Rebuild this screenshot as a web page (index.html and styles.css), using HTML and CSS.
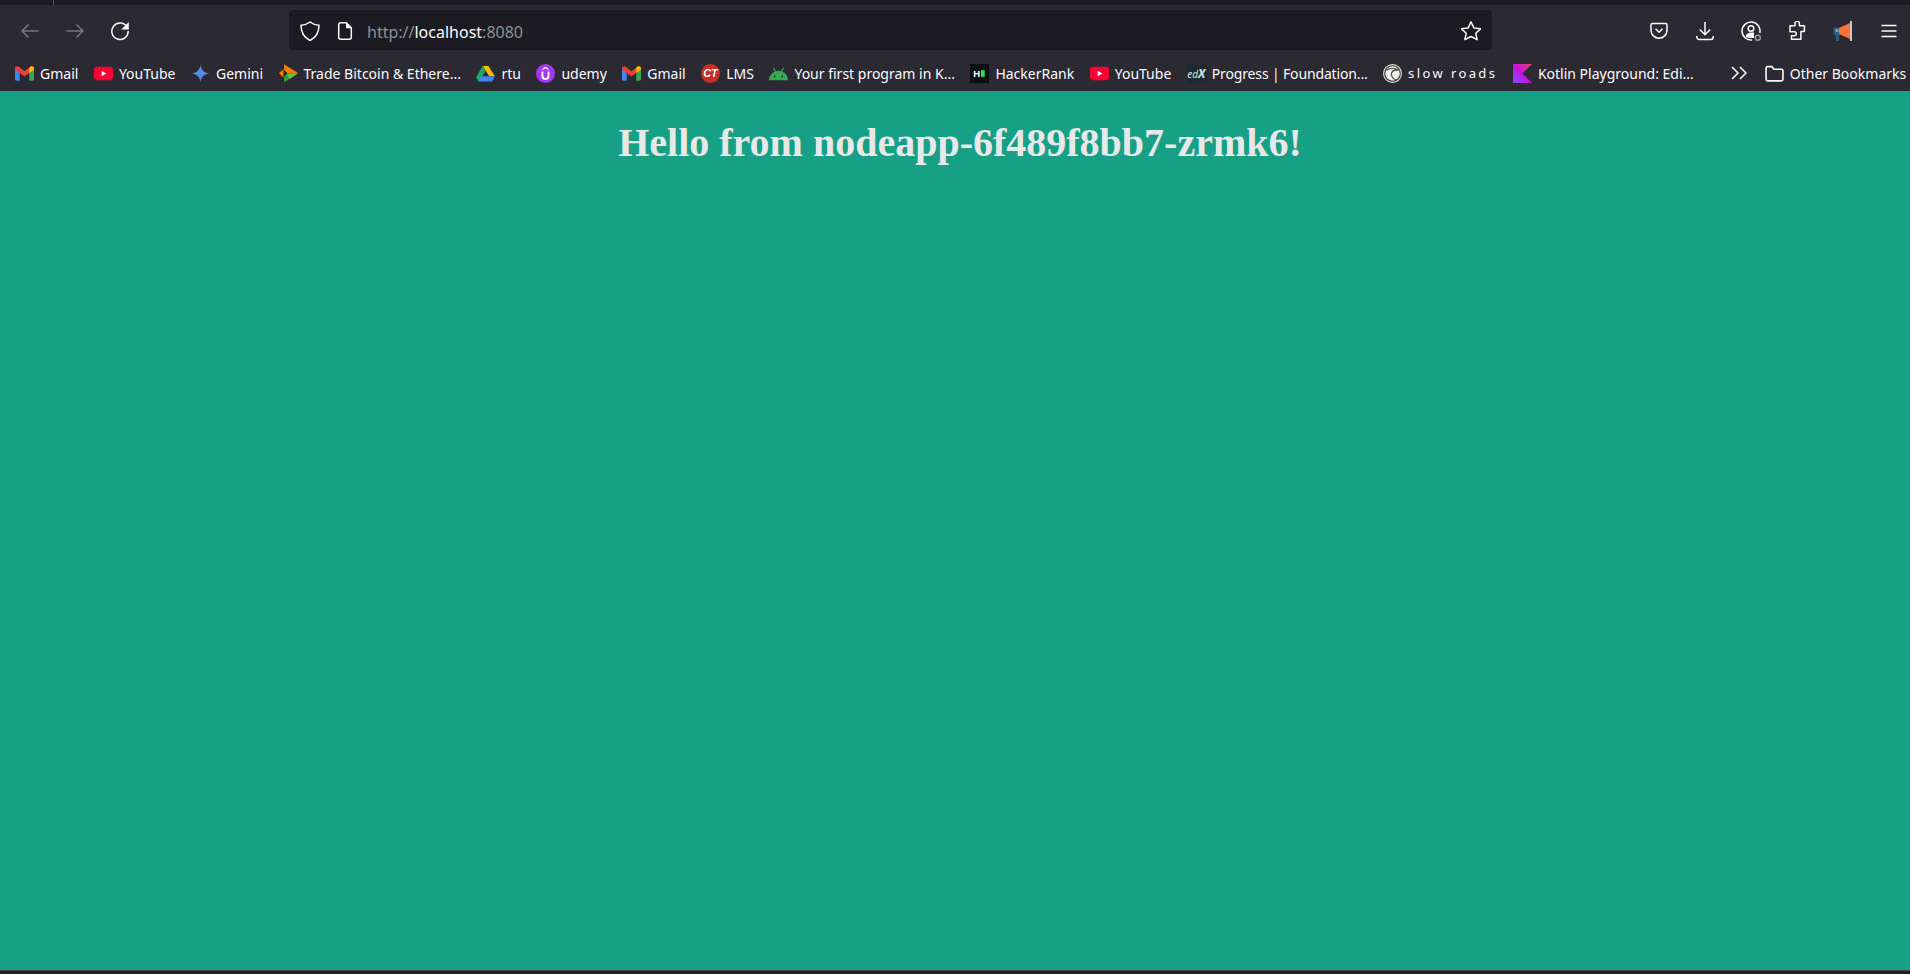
FILE: index.html
```html
<!DOCTYPE html>
<html lang="en">
<head>
  <meta charset="UTF-8" />
  <title>Hello from nodeapp</title>
  <link rel="stylesheet" href="styles.css">
</head>
<body>
  <div class="tabstrip"><span class="tab-edge"></span></div>

  <div class="toolbar">
    <div class="nav">
      <svg class="ico dim" viewBox="0 0 20 20"><path d="M18.500 10H2M8.500 3.500 2 10l6.500 6.500"/></svg>
      <svg class="ico dim" viewBox="0 0 20 20"><path d="M1.500 10H18M11.500 3.500 18 10l-6.500 6.500"/></svg>
      <svg class="ico" viewBox="0 0 20 20"><path d="M17 6A8.200 8.200 0 1 0 18.200 10"/><path class="fill" d="M18.800 1v7.500h-7.500z"/></svg>
    </div>
    <div class="urlbar">
      <svg class="ico" viewBox="0 0 20 20"><path d="M10 1c2.500 2 5.500 3 9 3.200 0 6.800-2 11.800-9 15.300-7-3.500-9-8.500-9-15.300C4.500 4 7.500 3 10 1z"/></svg>
      <svg class="ico page" viewBox="0 0 20 20"><path d="M5.500 1.800h5.800l5 5v9.400a2 2 0 0 1-2 2H5.700a2 2 0 0 1-2-2V3.800a2 2 0 0 1 1.800-2z"/><path class="fill" d="M11 1.800l5.300 5.400H11z"/></svg>
      <span class="url">http://<b>localhost</b>:8080</span>
      <svg class="ico star" viewBox="0 0 20 20"><path d="M10 .9l3 6.200 6.600.7-4.800 4.500 1.300 6.400-6.100-3.200-6.100 3.200 1.300-6.400L.4 7.800 7 7.100z"/></svg>
    </div>
    <div class="tools">
      <svg class="ico" viewBox="0 0 20 20"><path d="M3.500 2.500h13a1.500 1.500 0 0 1 1.500 1.500v5.200a8 8 0 0 1-16 0V4a1.500 1.500 0 0 1 1.500-1.500z"/><path d="M6.500 7.800 10 11.300l3.500-3.500"/></svg>
      <svg class="ico" viewBox="0 0 20 20"><path d="M10 1v12.500M4.800 8.500l5.200 5.200 5.200-5.200M1.800 15v1a2.500 2.500 0 0 0 2.500 2.500h11.400a2.500 2.500 0 0 0 2.500-2.500v-1"/></svg>
      <svg class="ico" viewBox="0 0 20 20"><path d="M18.800 12A9 9 0 1 0 11 19"/><circle cx="10" cy="7.500" r="2.800"/><path class="fill" d="M4.500 15.500c1-3 3.200-4 5.500-4h3v5.500h-4.500c-1.500-.2-3-.6-4-1.500z"/><circle class="badge" cx="16.800" cy="16.800" r="2.500"/></svg>
      <svg class="ico" viewBox="0 0 20 20"><path d="M8 2.500a2.200 2.200 0 0 1 4.400 0v2.300h5v5.800h-3.500v7.700H4.500v-3.600h2.800a2 2 0 0 0 0-4H3V4.800h5z"/></svg>
      <svg class="ico" viewBox="0 0 20 20"><path class="mega-blue" d="M.5 6.500h7v7L6 14.500V20H3v-5.500l-2.500-1z"/><path class="mega-grey" d="M2.500 8h3v3h-3z"/><path class="mega-orange" d="M6 7l11-5v16L6 13z"/><path class="mega-line" d="M18 0v20"/></svg>
      <svg class="ico" viewBox="0 0 20 20"><path d="M2.500 4.500h15M2.500 10h15M2.500 15.500h15"/></svg>
    </div>
  </div>

  <div class="bookmarks">
    <a class="bm">
      <svg class="fav" viewBox="0 0 20 16"><path fill="#4285f4" d="M0 3v11a1.500 1.500 0 0 0 1.500 1.500H5V7z"/><path fill="#34a853" d="M20 3v11a1.500 1.500 0 0 1-1.500 1.500H15V7z"/><path fill="#ea4335" d="M0 2.500C0 .6 2.200-.4 3.600.7L10 5.500 16.400.7C17.800-.4 20 .6 20 2.500V4l-5 3.500-5 3.700-5-3.700-5-3.500z"/><path fill="#fbbc04" d="M15 2.500 16.400.7C17.800-.4 20 .6 20 2.500V4l-5 3.500z"/></svg>
      <span>Gmail</span>
    </a>
    <a class="bm">
      <svg class="fav" viewBox="0 0 20 15"><rect width="20" height="14" y=".5" rx="3.500" fill="#ff0033"/><path fill="#fff" d="M8 4.500l5 3-5 3z"/></svg>
      <span>YouTube</span>
    </a>
    <a class="bm">
      <svg class="fav" viewBox="0 0 20 20"><defs><linearGradient id="gem" x1="0" y1="1" x2="1" y2="0"><stop offset="0" stop-color="#4f86e0"/><stop offset=".6" stop-color="#5a8ce6"/><stop offset="1" stop-color="#7a68c8"/></linearGradient></defs><path fill="url(#gem)" d="M10 1c.8 5 3.500 8 9 9-5.500 1-8.200 4-9 9-.8-5-3.500-8-9-9 5.500-1 8.200-4 9-9z"/></svg>
      <span>Gemini</span>
    </a>
    <a class="bm">
      <svg class="fav" viewBox="0 0 20 20"><path fill="#f57c00" d="M5.300.3 20 9.500H8.500L5.300 6z"/><path fill="#f57c00" d="M0 9.800l4.700-4.500v9z"/><path fill="#2e9e3f" d="M5.300 19.500 20 9.800 8.500 10l-3.200 3.500z"/><path fill="#6cc04a" d="M8.500 10 20 9.800l-9 6z"/></svg>
      <span>Trade Bitcoin &amp; Ethere...</span>
    </a>
    <a class="bm">
      <svg class="fav" viewBox="0 0 20 18"><path fill="#fbbc04" d="M7 1h6l7 11h-6z"/><path fill="#1fa463" d="M7 1l3 5.500L3 18l-3-5z"/><path fill="#4285f4" d="M5.500 12H20l-3 5.500H2.800z"/></svg>
      <span>rtu</span>
    </a>
    <a class="bm">
      <svg class="fav" viewBox="0 0 20 20"><circle cx="10" cy="10" r="10" fill="#a435f0"/><path fill="none" stroke="#fff" stroke-width="2" d="M6.800 8v4.500a3.200 3.200 0 0 0 6.400 0V8"/><path fill="#fff" d="M10 3l3.200 2v1.500L10 4.600 6.800 6.500V5z"/></svg>
      <span>udemy</span>
    </a>
    <a class="bm">
      <svg class="fav" viewBox="0 0 20 16"><path fill="#4285f4" d="M0 3v11a1.500 1.500 0 0 0 1.500 1.500H5V7z"/><path fill="#34a853" d="M20 3v11a1.500 1.500 0 0 1-1.500 1.500H15V7z"/><path fill="#ea4335" d="M0 2.500C0 .6 2.200-.4 3.600.7L10 5.500 16.400.7C17.800-.4 20 .6 20 2.500V4l-5 3.500-5 3.700-5-3.700-5-3.500z"/><path fill="#fbbc04" d="M15 2.500 16.400.7C17.800-.4 20 .6 20 2.500V4l-5 3.500z"/></svg>
      <span>Gmail</span>
    </a>
    <a class="bm">
      <svg class="fav" viewBox="0 0 20 20"><circle cx="10" cy="10" r="10" fill="#c62f27"/><text class="logo-text slant" x="10" y="14" font-size="11.500" fill="#fff">CT</text></svg>
      <span>LMS</span>
    </a>
    <a class="bm">
      <svg class="fav" viewBox="0 0 20 14"><path fill="#34a853" d="M0 14a10 10 0 0 1 20 0z"/><path stroke="#34a853" stroke-width="1.200" d="M4.500 1l2.500 4M15.500 1L13 5"/><circle cx="6" cy="10" r="1" fill="#2b2a33"/><circle cx="14" cy="10" r="1" fill="#2b2a33"/></svg>
      <span>Your first program in K...</span>
    </a>
    <a class="bm">
      <svg class="fav" viewBox="0 0 20 20"><rect width="20" height="20" fill="#0b0f14"/><text class="logo-text" x="7" y="13.500" font-size="10" fill="#fff">H</text><rect x="11.500" y="6.500" width="4" height="7" fill="#1ee35f"/></svg>
      <span>HackerRank</span>
    </a>
    <a class="bm">
      <svg class="fav" viewBox="0 0 20 15"><rect width="20" height="14" y=".5" rx="3.500" fill="#ff0033"/><path fill="#fff" d="M8 4.500l5 3-5 3z"/></svg>
      <span>YouTube</span>
    </a>
    <a class="bm">
      <i class="fav edx">ed<em>X</em></i>
      <span class="tight">Progress | Foundation...</span>
    </a>
    <a class="bm">
      <svg class="fav" viewBox="0 0 20 20"><circle cx="10" cy="10" r="9.400" fill="#3a3a3a" stroke="#dcdcd6" stroke-width="1.200"/><circle cx="10" cy="10" r="7.600" fill="#f1f1ec"/><path fill="none" stroke="#55584f" stroke-width="1.400" d="M3.500 6.500C7 4 13 4 16.500 6.500 13 6 10 6.500 9 9.500s1.500 6 4.500 7"/></svg>
      <span class="spaced">slow roads</span>
    </a>
    <a class="bm">
      <svg class="fav" viewBox="0 0 20 20"><defs><linearGradient id="kot" x1="0" y1="1" x2="1" y2="0"><stop offset="0" stop-color="#7f52ff"/><stop offset=".5" stop-color="#c711e1"/><stop offset="1" stop-color="#e44857"/></linearGradient></defs><path fill="url(#kot)" d="M0 0h20L10 10l10 10H0z"/></svg>
      <span>Kotlin Playground: Edi...</span>
    </a>
    <svg class="more" viewBox="0 0 16 14"><path d="M1 1l6 6-6 6M9 1l6 6-6 6"/></svg>
    <a class="bm last">
      <svg class="fav folder" viewBox="0 0 18 16"><path d="M1 3a1.500 1.500 0 0 1 1.500-1.500h4l2 2.500h7A1.500 1.500 0 0 1 17 5.500v8a1.500 1.500 0 0 1-1.500 1.500h-13A1.500 1.500 0 0 1 1 13.500z"/></svg>
      <span>Other Bookmarks</span>
    </a>
  </div>

  <main class="page-area">
    <h1>Hello from nodeapp-6f489f8bb7-zrmk6!</h1>
  </main>

  <div class="bottom-edge"></div>
</body>
</html>
```

FILE: styles.css
```css
html, body { height: 100%; }
body {
  margin: 0;
  display: flex;
  flex-direction: column;
  overflow: hidden;
  background-color: #1f1f1f;
  font-family: "Noto Sans", sans-serif;
  color: #fbfbfe;
}

.tabstrip { height: 5px; flex: none; background-color: #1c1b22; padding-left: 53px; }
.tab-edge { display: block; width: 1px; height: 5px; background-color: #55545c; }

.toolbar {
  height: 50px;
  flex: none;
  display: flex;
  align-items: flex-start;
  padding-top: 5px;
  box-sizing: border-box;
  background-color: #2b2a33;
}

.ico {
  width: 20px;
  height: 20px;
  flex: none;
  fill: none;
  stroke: #fbfbfe;
  stroke-width: 1.500;
  stroke-linejoin: round;
}
.ico .fill { fill: #fbfbfe; stroke: none; }
.ico.dim { stroke: #77767c; }

.nav { width: 289px; flex: none; height: 40px; display: flex; align-items: center; gap: 25px; padding: 2px 0 0 20px; box-sizing: border-box; }

.urlbar {
  width: 1203px;
  height: 40px;
  flex: none;
  display: flex;
  align-items: center;
  padding: 2px 11px 0 11px;
  box-sizing: border-box;
  border-radius: 4px;
  background-color: #1c1b22;
}
.page { margin-left: 15px; }
.url { margin: 2px 0 0 12px; font-size: 16px; color: #8f8f93; flex: 1; }
.url b { font-weight: 400; color: #fbfbfe; }

.tools { flex: 1; height: 40px; display: flex; align-items: center; gap: 26px; padding: 2px 0 0 157px; box-sizing: border-box; }
.badge { fill: #2b2a33; stroke: #9c9ba0; }
.mega-blue { fill: #2c5d7d; stroke: none; }
.mega-grey { fill: #8a96a0; stroke: none; }
.mega-orange { fill: #ff7139; stroke: none; }
.mega-line { stroke: #fbfbfe; }

.bookmarks {
  height: 36px;
  flex: none;
  display: flex;
  align-items: center;
  gap: 15.500px;
  padding-left: 15px;
  box-sizing: border-box;
  background-color: #2b2a33;
  font-size: 14px;
}
.bm { display: flex; align-items: center; gap: 6px; white-space: nowrap; }
.fav { width: 19px; height: 19px; flex: none; }
.logo-text { font-family: "Liberation Sans", sans-serif; font-weight: 700; text-anchor: middle; }
.slant { font-style: italic; }
.tight { letter-spacing: -0.15px; }
.spaced { letter-spacing: 2.400px; font-size: 13px; }
.edx { display: block; background-color: #1d2b30; color: #cfe3e6; font-size: 10px; line-height: 19px; text-align: center; font-style: italic; }
.edx em { font-weight: 700; font-size: 12px; }
.more { width: 16px; height: 14px; flex: none; margin-left: 22px; fill: none; stroke: #fbfbfe; stroke-width: 1.500; }
.last { margin-left: 2px; }
.folder { fill: none; stroke: #fbfbfe; stroke-width: 1.500; }

.page-area { flex: 1; background-color: #16a085; }
h1 {
  margin: 0;
  padding-top: 28px;
  padding-left: 10px;
  text-align: center;
  font-family: "Liberation Serif", serif;
  font-size: 40px;
  font-weight: 700;
  color: #e8e8e8;
}

.bottom-edge { height: 4px; flex: none; box-sizing: border-box; border-top: 1px solid #444; background-color: #1f1f1f; }
```
